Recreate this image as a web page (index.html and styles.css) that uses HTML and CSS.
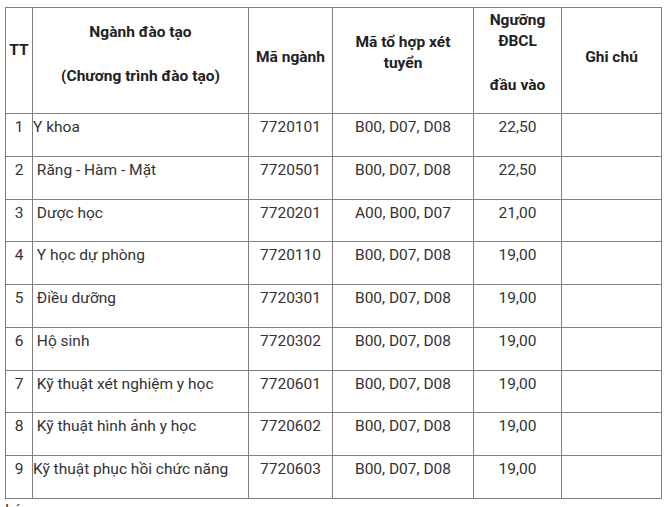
FILE: index.html
```html
<!DOCTYPE html>
<html lang="vi">
<head>
<meta charset="utf-8">
<link rel="stylesheet" href="styles.css">
</head>
<body>
<div class="page">
<table class="tbl">
  <colgroup>
    <col class="c1"><col class="c2"><col class="c3"><col class="c4"><col class="c5"><col class="c6">
  </colgroup>
  <thead>
    <tr class="head">
      <th><p class="h-tt">TT</p></th>
      <th><p class="h-nganh">Ngành đào tạo</p><p class="h-sub">(Chương trình đào tạo)</p></th>
      <th><p class="h-ma">Mã ngành</p></th>
      <th><p class="h-tohop">Mã tổ hợp xét<br>tuyển</p></th>
      <th><p class="h-nguong">Ngưỡng<br>ĐBCL</p><p class="h-sub">đầu vào</p></th>
      <th><p class="h-ma">Ghi chú</p></th>
    </tr>
  </thead>
  <tbody>
    <tr><td class="num">1</td><td class="name">Y khoa</td><td class="ctr">7720101</td><td class="ctr">B00, D07, D08</td><td class="ctr">22,50</td><td></td></tr>
    <tr><td class="num">2</td><td class="name">&nbsp;Răng - Hàm - Mặt</td><td class="ctr">7720501</td><td class="ctr">B00, D07, D08</td><td class="ctr">22,50</td><td></td></tr>
    <tr><td class="num">3</td><td class="name">&nbsp;Dược học</td><td class="ctr">7720201</td><td class="ctr">A00, B00, D07</td><td class="ctr">21,00</td><td></td></tr>
    <tr><td class="num">4</td><td class="name">&nbsp;Y học dự phòng</td><td class="ctr">7720110</td><td class="ctr">B00, D07, D08</td><td class="ctr">19,00</td><td></td></tr>
    <tr><td class="num">5</td><td class="name">&nbsp;Điều dưỡng</td><td class="ctr">7720301</td><td class="ctr">B00, D07, D08</td><td class="ctr">19,00</td><td></td></tr>
    <tr><td class="num">6</td><td class="name">&nbsp;Hộ sinh</td><td class="ctr">7720302</td><td class="ctr">B00, D07, D08</td><td class="ctr">19,00</td><td></td></tr>
    <tr><td class="num">7</td><td class="name">&nbsp;Kỹ thuật xét nghiệm y học</td><td class="ctr">7720601</td><td class="ctr">B00, D07, D08</td><td class="ctr">19,00</td><td></td></tr>
    <tr><td class="num">8</td><td class="name">&nbsp;Kỹ thuật hình ảnh y học</td><td class="ctr">7720602</td><td class="ctr">B00, D07, D08</td><td class="ctr">19,00</td><td></td></tr>
    <tr><td class="num">9</td><td class="name">Kỹ thuật phục hồi chức năng</td><td class="ctr">7720603</td><td class="ctr">B00, D07, D08</td><td class="ctr">19,00</td><td></td></tr>
  </tbody>
</table>
<p class="note">Lúc</p>
</div>
</body>
</html>
```
FILE: styles.css
```css
html, body {
  margin: 0;
  padding: 0;
  background: #fff;
}
.page {
  padding: 7px 0 0 5px;
  font-family: Roboto, "Noto Sans", sans-serif;
  font-size: 15.5px;
  line-height: 21px;
  color: #333;
}
.tbl {
  border-collapse: collapse;
  table-layout: fixed;
  width: 657px;
}
.c1 { width: 27px; }
.c2 { width: 216px; }
.c3 { width: 84px; }
.c4 { width: 141px; }
.c5 { width: 88px; }
.c6 { width: 100px; }
.tbl th, .tbl td {
  border: 1px solid #808080;
  padding: 0;
  vertical-align: top;
}
.tbl th {
  font-weight: 700;
  color: #222;
  text-align: center;
}
.tbl p {
  margin: 0;
}
.head {
  height: 106px;
}
.tbl tbody tr {
  height: 42.75px;
}
.h-tt { padding-top: 32px; }
.h-nganh { padding-top: 14px; }
.h-sub { padding-top: 23px; }
.h-ma { padding-top: 39px; }
.h-tohop { padding-top: 24px; }
.h-nguong { padding-top: 2px; }
.tbl td {
  padding-top: 3px;
}
.num, .ctr {
  text-align: center;
}
.name {
  padding-left: 2px;
}
.note {
  margin: 0;
  padding-top: 1px;
}
```
